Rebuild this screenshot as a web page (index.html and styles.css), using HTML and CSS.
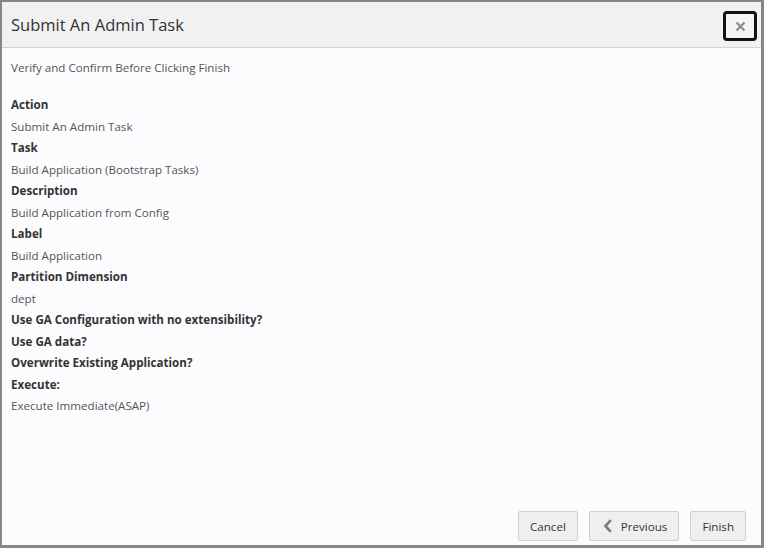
FILE: index.html
```html
<!DOCTYPE html>
<html lang="en">
<head>
    <meta charset="UTF-8">
    <meta name="viewport" content="width=device-width, initial-scale=1.0">
    <title>Submit An Admin Task</title>
    <link rel="stylesheet" href="styles.css">
</head>
<body>
<div class="dialog">
    <!-- header -->
    <div class="dialog-header">
        <h1 class="dialog-title">Submit An Admin Task</h1>
        <button class="close-btn" title="Close">
            <svg width="11" height="11" viewBox="0 0 11 11"><path d="M1.5 1.5 L9.5 9.5 M9.5 1.5 L1.5 9.5" stroke="#858a94" stroke-width="2.2" fill="none"/></svg>
        </button>
    </div>

    <!-- summary -->
    <div class="dialog-body">
        <p class="intro">Verify and Confirm Before Clicking Finish</p>
        <dl class="summary">
            <dt>Action</dt>
            <dd>Submit An Admin Task</dd>
            <dt>Task</dt>
            <dd>Build Application (Bootstrap Tasks)</dd>
            <dt>Description</dt>
            <dd>Build Application from Config</dd>
            <dt>Label</dt>
            <dd>Build Application</dd>
            <dt>Partition Dimension</dt>
            <dd>dept</dd>
            <dt>Use GA Configuration with no extensibility?</dt>
            <dt>Use GA data?</dt>
            <dt>Overwrite Existing Application?</dt>
            <dt>Execute:</dt>
            <dd>Execute Immediate(ASAP)</dd>
        </dl>
    </div>

    <!-- buttons -->
    <div class="dialog-footer">
        <button class="btn">Cancel</button>
        <button class="btn btn-prev">
            <svg width="10" height="14" viewBox="0 0 10 14"><path d="M7.8 1.2 L2.4 7 L7.8 12.8" stroke="#7b7b7b" stroke-width="2.6" fill="none"/></svg>
            Previous
        </button>
        <button class="btn">Finish</button>
    </div>
</div>
</body>
</html>
```

FILE: styles.css
```css
/* page styles */

html, body {
    margin: 0;
    padding: 0;
    height: 100%;
}
body {
    font-family: 'Open Sans', 'Noto Sans', Arial, sans-serif;
    background-color: #fcfcfe;
    color: #333;
}
.dialog {
    box-sizing: border-box;
    height: 100%;
    display: flex;
    flex-direction: column;
    border: 2px solid #8a8685;
    border-right-width: 3px;
    border-bottom-width: 3px;
    background-color: #fcfcfe;
}
.dialog-header {
    display: flex;
    align-items: center;
    justify-content: space-between;
    height: 45px;
    padding: 0 4px 0 9px;
    background-color: #f1f1f1;
    border-bottom: 1px solid #d4d4d4;
}
.dialog-title {
    margin: 0;
    font-size: 16.5px;
    font-weight: normal;
    color: #333;
}
.close-btn {
    display: flex;
    align-items: center;
    justify-content: center;
    width: 34px;
    height: 30px;
    margin-top: 3px;
    padding: 0;
    border: 3px solid #111;
    border-radius: 4px;
    background-color: #f4f4f4;
}
.dialog-body {
    flex: 1;
    padding: 10px 9px 0 9px;
    font-size: 11.6px;
}
.intro {
    margin: 0 0 16px 0;
    line-height: 20px;
    color: #555;
}
.summary {
    margin: 0;
}
.summary dt {
    font-weight: bold;
    color: #333;
    line-height: 21.5px;
}
.summary dd {
    margin: 0;
    color: #555;
    line-height: 21.5px;
}
.dialog-footer {
    display: flex;
    justify-content: flex-end;
    gap: 11px;
    padding: 0 15px 4px 0;
}
.btn {
    display: flex;
    align-items: center;
    gap: 8px;
    height: 30px;
    padding: 0 11px;
    font-family: inherit;
    font-size: 11.6px;
    color: #333;
    background-color: #efefef;
    border: 1px solid #cfcfcf;
    border-radius: 2px;
}
.btn-prev {
    padding-left: 13px;
    padding-right: 11px;
}
```
